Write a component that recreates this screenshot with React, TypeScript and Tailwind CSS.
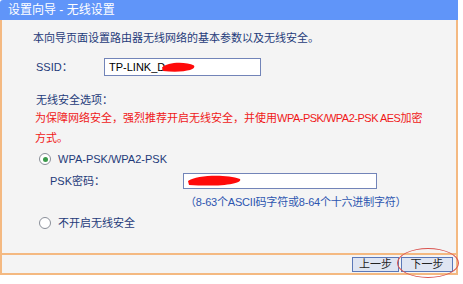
import React from "react";

const font = { fontFamily: '"Liberation Sans", "Noto Sans CJK SC", sans-serif' };

function Radio({ checked, label }: { checked?: boolean; label: string }) {
  return (
    <div className="flex items-center h-[14px] pl-[37px]">
      <span className="w-[12px] h-[12px] rounded-full border border-[#8a8f99] bg-white flex items-center justify-center">
        {checked && <span className="w-[5px] h-[5px] rounded-full bg-[#3a9a4a]" />}
      </span>
      <span className="ml-[7px] text-[#1f3b7a]">{label}</span>
    </div>
  );
}

function Scribble({ w, h }: { w: number; h: number }) {
  return (
    <svg width={w} height={h} viewBox={`0 0 ${w} ${h}`} className="absolute left-0 top-0">
      <path
        d={`M3 ${h / 2} C ${w * 0.2} 1, ${w * 0.7} 0, ${w - 3} ${h * 0.35} C ${w} ${h * 0.7}, ${w * 0.6} ${h - 1}, 4 ${h - 3} Z`}
        fill="#ff0a0a"
      />
    </svg>
  );
}

export default function App() {
  return (
    <div className="w-[463px] h-[284px] bg-white text-[11px]" style={font}>
      <div className="w-[458px]">
        <div className="h-[20px] bg-[#6095f9] rounded-tl-[3px] text-white text-[12px] pl-[8px] flex items-center">
          设置向导 - 无线设置
        </div>

        <div className="border-x-2 border-b-2 border-[#f4b981] bg-[#f4f4f4]">
          <div className="h-[233px] pt-[11px] text-[#1f3b7a]">
            <div className="pl-[31px] leading-[14px]">本向导页面设置路由器无线网络的基本参数以及无线安全。</div>

            <div className="mt-[13px] flex items-center h-[18px]">
              <span className="pl-[34px] w-[102px]">SSID：</span>
              <div className="relative w-[157px] h-[18px] border border-[#7284b8] bg-white flex items-center pl-[4px] text-black">
                TP-LINK_D
                <div className="absolute left-[54px] top-[2px]">
                  <Scribble w={38} h={13} />
                </div>
              </div>
            </div>

            <div className="mt-[17px] pl-[34px] leading-[14px]">无线安全选项：</div>

            <div className="mt-[1px] pl-[33px] pr-[12px] leading-[20px] text-[#f01818]">
              为保障网络安全，强烈推荐开启无线安全，并使用
              <span className="tracking-[-0.5px]">WPA-PSK/WPA2-PSK AES</span>加密
              <br />
              方式。
            </div>

            <div className="mt-[4px]">
              <Radio checked label="WPA-PSK/WPA2-PSK" />
            </div>

            <div className="mt-[7px] flex items-center h-[16px]">
              <span className="pl-[48px] w-[181px]">PSK密码：</span>
              <div className="relative w-[194px] h-[16px] border border-[#7284b8] bg-white">
                <div className="absolute left-[1px] top-[0px]">
                  <Scribble w={58} h={14} />
                </div>
              </div>
            </div>

            <div className="mt-[6px] pl-[183px] leading-[14px] text-[#2d56b0] tracking-[-0.2px]">
              （8-63个ASCII码字符或8-64个十六进制字符）
            </div>

            <div className="mt-[7px]">
              <Radio label="不开启无线安全" />
            </div>
          </div>

          <div className="border-t-2 border-[#f4b981] h-[20px] flex items-center justify-end gap-[2px] pr-[3px]">
            <button className="w-[47px] h-[15px] border border-[#5b78b8] bg-[#dfe5f2] text-[#222] text-[11px] leading-[13px]">
              上一步
            </button>
            <div className="relative">
              <button className="w-[52px] h-[15px] border border-[#5b78b8] bg-[#dfe5f2] text-[#222] text-[11px] leading-[13px]">
                下一步
              </button>
              <span className="absolute left-[-4px] top-[-8px] w-[62px] h-[30px] rounded-[50%] border border-[#d9534f]" />
            </div>
          </div>
        </div>
      </div>
    </div>
  );
}
